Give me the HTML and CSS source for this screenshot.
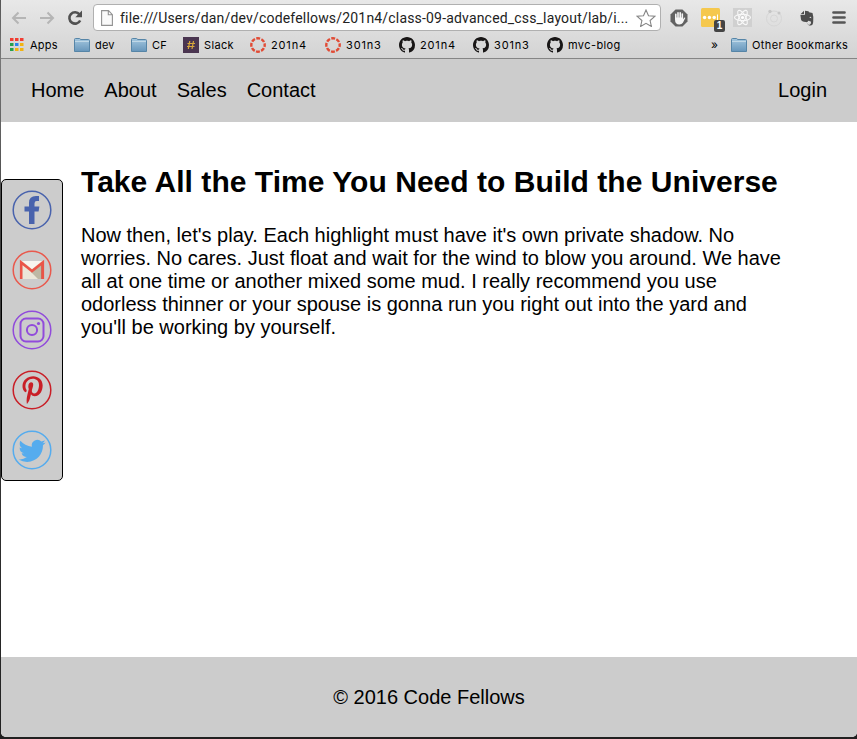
FILE: index.html
```html
<!DOCTYPE html>
<html lang="en">
<head>
<meta charset="utf-8">
<title>Code Fellows</title>
<link rel="stylesheet" href="styles.css">
</head>
<body>
<svg class="defs" aria-hidden="true">
  <defs>
    <linearGradient id="blue" x2="0" y2="1"><stop stop-color="#a4c7df"/><stop offset="1" stop-color="#6796bb"/></linearGradient>
    <symbol id="folder" viewBox="0 0 16 16"><path d="M.5 14.500V2.500q0-1 1-1h4q.8 0 1 1h8q1 0 1 1v11z" fill="url(#blue)" stroke="#5685a7"/><path d="M1 4.500h14" stroke="#c0d8e7"/></symbol>
    <symbol id="ring" viewBox="0 0 16 16"><circle cx="8" cy="8" r="6.700" fill="none" stroke="#e14b35" stroke-width="2.400" stroke-dasharray="3.900 1.362" stroke-dashoffset="1.950"/></symbol>
    <symbol id="github" viewBox="0 0 16 16"><path fill="#181616" d="M8 0C3.580 0 0 3.580 0 8c0 3.540 2.290 6.530 5.470 7.590.4.070.55-.17.55-.38 0-.19-.01-.82-.01-1.490-2.010.37-2.530-.49-2.690-.94-.09-.23-.48-.94-.82-1.130-.28-.15-.68-.52-.01-.53.63-.01 1.080.58 1.230.82.72 1.210 1.870.87 2.330.66.07-.52.28-.87.51-1.070-1.780-.2-3.640-.89-3.640-3.950 0-.87.31-1.590.82-2.150-.08-.2-.36-1.020.08-2.120 0 0 .67-.21 2.200.82.64-.18 1.320-.27 2-.27s1.360.09 2 .27c1.530-1.040 2.200-.82 2.200-.82.44 1.100.16 1.920.08 2.120.51.56.82 1.270.82 2.150 0 3.070-1.870 3.750-3.650 3.950.29.25.54.73.54 1.480 0 1.070-.01 1.930-.01 2.200 0 .21.15.46.55.38A8.010 8.010 0 0 0 16 8c0-4.420-3.580-8-8-8z"/></symbol>
  </defs>
</svg>
<div class="window">
  <div class="chrome">
    <div class="toolbar">
      <svg class="arrow" viewBox="0 0 16 14"><path d="M15 7H2M7.500 1.500L2 7l5.500 5.500" fill="none" stroke="#b5b5b5" stroke-width="2"/></svg>
      <svg class="arrow forward" viewBox="0 0 16 14"><path d="M15 7H2M7.500 1.500L2 7l5.500 5.500" fill="none" stroke="#b5b5b5" stroke-width="2"/></svg>
      <svg class="reload" viewBox="0 0 16 16"><path d="M12.500 4.300A5.700 5.700 0 1 0 13.200 10.500" fill="none" stroke="#515151" stroke-width="2.600"/><path d="M15 .5v6.700H8.300z" fill="#515151"/></svg>
      <div class="address">
        <svg class="page-icon" viewBox="0 0 12 16"><path d="M.6.600h6.900l3.900 4v10.800H.6zM7.300.800v4h4" fill="#fafafa" stroke="#929292" stroke-width="1.100"/></svg>
        <span class="url">file:///Users/dan/dev/codefellows/201n4/class-09-advanced_css_layout/lab/i...</span>
        <svg class="star" viewBox="0 0 20 18"><path d="M10 1l2.500 5.700 6.300.6-4.700 4.200 1.300 6L10 14.300 4.600 17.500l1.300-6L1.200 7.300l6.300-.6z" fill="#fff" stroke="#858585" stroke-width="1.100"/></svg>
      </div>
      <div class="extensions">
        <svg viewBox="0 0 18 18"><path d="M5.500.5h7l5 5v7l-5 5h-7l-5-5v-7z" fill="#626262"/><path d="M5.800 9V5.200M8 9V3.700M10.200 9V3.700M12.300 9.500V5" stroke="#f4f4f4" stroke-width="1.600" stroke-linecap="round"/><path d="M5 8.500h8.100v1.700l1.300-1.700q.9-.2.900.6l-2.400 4.600q-1.200 1.700-3.500 1.700-4.400 0-4.400-5z" fill="#f4f4f4"/></svg>
        <div class="dots"><svg viewBox="0 0 19 19"><rect width="19" height="19" rx="1.500" fill="#f5c84e"/><g fill="#fff"><circle cx="3.600" cy="9.500" r="1.700"/><circle cx="8.400" cy="9.500" r="1.700"/><circle cx="13.200" cy="9.500" r="1.700"/><path d="M16 6.500h1v6h-1z"/></g></svg><span class="badge">1</span></div>
        <svg viewBox="0 0 19 19"><path fill="#d0d0d0" d="M0 0h19v19H0z"/><g fill="none" stroke="#f8f8f8" stroke-width="1.100"><ellipse cx="9.500" cy="9.500" rx="8" ry="3.100"/><ellipse cx="9.500" cy="9.500" rx="8" ry="3.100" transform="rotate(60 9.500 9.500)"/><ellipse cx="9.500" cy="9.500" rx="8" ry="3.100" transform="rotate(120 9.500 9.500)"/></g><circle cx="9.500" cy="9.500" r="1.600" fill="#fff"/></svg>
        <svg viewBox="0 0 18 18"><g fill="none" stroke="#d6d6d6"><circle cx="9" cy="9.500" r="7.500"/><circle cx="9" cy="9.500" r="3.500"/></g><circle cx="5" cy="2.500" r="1.700" fill="#c6c6c6"/><circle cx="14" cy="4" r="1.500" fill="#c6c6c6"/></svg>
        <svg viewBox="0 0 14 16"><path d="M.5 4.200L4 .8v3.400zM5 .8l3.500.5.5.9 3.500.7q1.300 3.500.7 9-.3 3.500-2.700 3.600-2.800 0-2.800-2 0-1.700 2-1.700v1.200q-.9 0-.7.9.2.5 1.200.4.900-.4.8-2.500-1.500-1-2.700-1-.5 1.700-2.500 1.300Q1.500 11.700 1 9.500L.4 5h3.700q.9 0 .9-.8z" fill="#4d4d4d"/><path d="M9.300 7.600q1.200-2 2.200.6z" fill="#e2e2e2"/><path d="M8 12.300q1-.8 2.300-.1v1.100q-1.100-.2-1.100.6 0 .7 1 .5-.3 1-1.500.5-1.400-1-.7-2.600z" fill="#e2e2e2"/></svg>
        <svg viewBox="0 0 14 13"><path d="M1.500 1.500h11M1.500 6.500h11M1.500 11.500h11" stroke="#555" stroke-width="2.700" stroke-linecap="round"/></svg>
      </div>
    </div>
    <div class="bookmarks">
      <span class="mark apps"><svg viewBox="0 0 16 16"><path d="M1 1h3.500v3H1zM6 1h3.500v3H6zM11 1h3.500v3H11z" fill="#f13d32"/><path d="M1 6h3.500v3H1zM1 11h3.500v3H1z" fill="#27a04d"/><path d="M6 6h3.500v3H6z" fill="#2d84ec"/><path d="M11 6h3.500v3H11zM6 11h3.500v3H6zM11 11h3.500v3H11z" fill="#f1b313"/></svg><span>Apps</span></span>
      <span class="mark"><svg><use href="#folder"/></svg><span>dev</span></span>
      <span class="mark"><svg><use href="#folder"/></svg><span>CF</span></span>
      <span class="mark slack"><svg viewBox="0 0 16 16"><path d="M0 0h16v16H0z" fill="#4a3550"/><path d="M6.800 4L5.300 12M10.500 4L9 12M4.500 6.500h7.500M4 9.500h7.500" stroke="#d7a63c" stroke-width="1.200"/></svg><span>Slack</span></span>
      <span class="mark num"><svg><use href="#ring"/></svg><span>201n4</span></span>
      <span class="mark num"><svg><use href="#ring"/></svg><span>301n3</span></span>
      <span class="mark num"><svg><use href="#github"/></svg><span>201n4</span></span>
      <span class="mark num"><svg><use href="#github"/></svg><span>301n3</span></span>
      <span class="mark blog"><svg><use href="#github"/></svg><span>mvc-blog</span></span>
      <span class="more">»</span>
      <span class="mark other"><svg><use href="#folder"/></svg><span>Other Bookmarks</span></span>
    </div>
  </div>
  <nav class="nav"><a>Home</a><a>About</a><a>Sales</a><a>Contact</a><a class="login">Login</a></nav>
  <main class="main">
    <aside class="social">
      <svg viewBox="0 0 40 40"><circle class="ring" cx="20" cy="20" r="18.800" stroke="#4963ad"/><path d="M17 34V21.500h-4.500v-5H17v-3.800Q17 6 24 6h3v5h-2.300q-2.200 0-2.200 2.400v3.100h4.900l-.8 5h-4.100V34z" fill="#4963ad"/></svg>
      <svg viewBox="0 0 40 40"><circle class="ring" cx="20" cy="20" r="18.800" stroke="#e9594d"/><path d="M8 11h24v18H8z" fill="#ebe7d9"/><path d="M10 11h20L20 19z" fill="#f7f5ef"/><path d="M20 21l-1 1 7 7h6V13z" fill="#bdb8a4"/><path d="M29.500 14L32 12v17h-2.500z" fill="#c6392e"/><path d="M9.200 29V12.500L20 21l10.800-8.500V29" fill="none" stroke="#ea5548" stroke-width="2.600"/></svg>
      <svg viewBox="0 0 40 40"><g fill="none" stroke="#914bdb"><circle class="ring" cx="20" cy="20" r="18.800"/><rect x="8.500" y="8.500" width="23" height="23" rx="5.500" stroke-width="2"/><circle cx="20" cy="20" r="5.100" stroke-width="2"/></g><circle cx="26.500" cy="13.500" r="1.600" fill="#914bdb"/></svg>
      <svg viewBox="0 0 40 40"><circle class="ring" cx="20" cy="20" r="18.800" stroke="#c91f27"/><path transform="translate(10.500 5.800) scale(.0525 .0555)" fill="#c91f27" d="M204 6.500C101.400 6.500 0 74.900 0 185.600 0 256 39.600 296 63.600 296c9.900 0 15.600-27.600 15.600-35.400 0-9.300-23.700-29.100-23.700-67.800 0-80.400 61.200-137.400 140.400-137.400 68.100 0 118.500 38.700 118.500 109.800 0 53.100-21.300 152.700-90.300 152.700-24.900 0-46.200-18-46.200-43.800 0-37.800 26.400-74.400 26.400-113.400 0-66.200-93.900-54.200-93.900 25.800 0 16.800 2.100 35.400 9.600 50.700-13.800 59.400-42 147.900-42 209.100 0 18.900 2.700 37.500 4.500 56.400 3.400 3.800 1.700 3.400 6.900 1.500 50.400-69 48.600-82.500 71.400-172.800 12.300 23.400 44.100 36 69.300 36 106.200 0 153.900-103.500 153.900-196.800C384 71.300 298.200 6.500 204 6.500z"/></svg>
      <svg viewBox="0 0 40 40"><circle class="ring" cx="20" cy="20" r="18.800" stroke="#55acee"/><path transform="translate(6.600 7.300) scale(1.130)" fill="#55acee" d="M23.950 4.570a10 10 0 0 1-2.820.78 4.960 4.960 0 0 0 2.160-2.720c-.95.56-2 .96-3.130 1.180a4.920 4.920 0 0 0-8.380 4.480C7.690 8.090 4.070 6.130 1.640 3.160a4.820 4.820 0 0 0-.67 2.480c0 1.710.87 3.210 2.190 4.090a4.900 4.900 0 0 1-2.230-.61v.06a4.920 4.920 0 0 0 3.950 4.830 5 5 0 0 1-2.210.08 4.940 4.940 0 0 0 4.600 3.420A9.870 9.870 0 0 1 0 19.540a14 14 0 0 0 7.550 2.210c9.050 0 14-7.500 14-13.980 0-.21 0-.42-.02-.63a9.940 9.940 0 0 0 2.420-2.570z"/></svg>
    </aside>
    <article class="article">
      <h1>Take All the Time You Need to Build the Universe</h1>
      <p>Now then, let's play. Each highlight must have it's own private shadow. No worries. No cares. Just float and wait for the wind to blow you around. We have all at one time or another mixed some mud. I really recommend you use odorless thinner or your spouse is gonna run you right out into the yard and you'll be working by yourself.</p>
    </article>
  </main>
  <footer class="footer">© 2016 Code Fellows</footer>
</div>
</body>
</html>
```

FILE: styles.css
```css
* { box-sizing: border-box; }
body { margin: 0; height: 739px; overflow: hidden; background: linear-gradient(#555, #777 8%, #444 30%, #202020); font: 20px/23px "Liberation Sans", Arial, sans-serif; color: #000; }
svg { display: block; flex: none; }
.defs { position: absolute; width: 0; height: 0; }
.window { margin-left: 1px; height: 737px; background: #fff; border-radius: 0 0 5px 5px; overflow: hidden; display: flex; flex-direction: column; }
.chrome { height: 59px; background: linear-gradient(#e8e8e8, #d3d3d3); border-bottom: 1px solid #858585; }
.toolbar { height: 35px; padding: 0 10px; display: flex; align-items: center; }
.arrow { width: 16px; height: 14px; }
.forward { transform: scaleX(-1); margin-left: 12px; }
.reload { width: 16px; height: 16px; margin-left: 12px; }
.address { width: 568px; height: 27px; margin-left: 10px; padding: 0 4px 0 7px; border: 1px solid #b0b0b0; border-radius: 4px; background: #fff; display: flex; align-items: center; }
.page-icon { width: 12px; height: 16px; }
.url { margin-left: 7px; width: 516px; font: 14px/20px Roboto, sans-serif; letter-spacing: 0.18px; color: #222; white-space: nowrap; }
.star { width: 20px; height: 18px; margin-left: 2px; }
.extensions { display: flex; align-items: center; margin-left: 9px; }
.extensions > :nth-child(1) { width: 18px; height: 18px; }
.dots { position: relative; margin-left: 13px; }
.dots svg { width: 19px; height: 19px; }
.badge { position: absolute; left: 13px; top: 12px; width: 11px; height: 12px; border-radius: 2px; background: #444; color: #fff; font: bold 10px/12px "Liberation Sans", sans-serif; text-align: center; }
.extensions > :nth-child(3) { width: 19px; height: 19px; margin-left: 13px; }
.extensions > :nth-child(4) { width: 18px; height: 18px; margin-left: 13px; }
.extensions > :nth-child(5) { width: 14px; height: 16px; margin-left: 17px; }
.extensions > :nth-child(6) { width: 14px; height: 13px; margin-left: 18px; }
.bookmarks { display: grid; grid-template-columns: 65px 57px 52px 67px 75px 74px 74px 74px 164px 20px 116px; align-items: center; height: 20px; padding-left: 8px; font: 400 11px/16px Inter, sans-serif; letter-spacing: 0.2px; white-space: nowrap; }
.mark { display: flex; align-items: center; gap: 5px; }
.mark svg { width: 16px; height: 16px; }
.slack { letter-spacing: 0.35px; }
.num { letter-spacing: 0.85px; }
.blog { letter-spacing: 0.4px; }
.other { letter-spacing: 0.38px; }
.more { font-size: 12px; }
.nav { height: 63px; flex: none; background: #ccc; padding: 20px 30px; display: flex; gap: 20px; }
.login { margin-left: auto; }
.main { flex: 1; display: flex; align-items: flex-start; }
.social { width: 62px; height: 302px; flex: none; margin-top: 57px; padding: 10px; border: 1px solid #000; border-radius: 5px; background: #ccc; display: flex; flex-direction: column; gap: 20px; }
.social svg { width: 40px; height: 40px; }
.ring { fill: none; stroke-width: 1.5px; }
.article { width: 710px; margin-left: 18px; padding-top: 42px; }
h1 { margin: 0; font-size: 30px; line-height: 35px; letter-spacing: 0.035px; white-space: nowrap; }
p { margin: 25px 0 0; }
.footer { height: 80px; flex: none; background: #ccc; text-align: center; line-height: 80px; }
```
